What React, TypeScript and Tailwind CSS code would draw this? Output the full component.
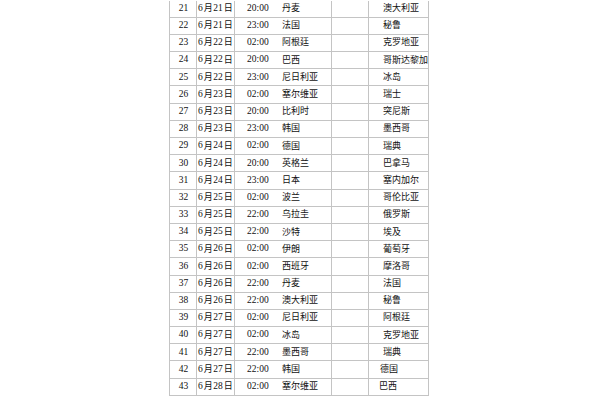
import React from "react";

type Row = [number, string, string, string, string, number?];

const rows: Row[] = [
  [21, "21", "20:00", "丹麦", "澳大利亚"],
  [22, "21", "23:00", "法国", "秘鲁"],
  [23, "22", "02:00", "阿根廷", "克罗地亚"],
  [24, "22", "20:00", "巴西", "哥斯达黎加"],
  [25, "22", "23:00", "尼日利亚", "冰岛"],
  [26, "23", "02:00", "塞尔维亚", "瑞士"],
  [27, "23", "20:00", "比利时", "突尼斯"],
  [28, "23", "23:00", "韩国", "墨西哥"],
  [29, "24", "02:00", "德国", "瑞典"],
  [30, "24", "20:00", "英格兰", "巴拿马"],
  [31, "24", "23:00", "日本", "塞内加尔"],
  [32, "25", "02:00", "波兰", "哥伦比亚"],
  [33, "25", "22:00", "乌拉圭", "俄罗斯"],
  [34, "25", "22:00", "沙特", "埃及"],
  [35, "26", "02:00", "伊朗", "葡萄牙"],
  [36, "26", "02:00", "西班牙", "摩洛哥"],
  [37, "26", "22:00", "丹麦", "法国"],
  [38, "26", "22:00", "澳大利亚", "秘鲁"],
  [39, "27", "02:00", "尼日利亚", "阿根廷"],
  [40, "27", "02:00", "冰岛", "克罗地亚"],
  [41, "27", "22:00", "墨西哥", "瑞典"],
  [42, "27", "22:00", "韩国", "德国", 11],
  [43, "28", "02:00", "塞尔维亚", "巴西", 10],
];

export default function App() {
  return (
    <div
      className="w-[600px] h-[400px] overflow-hidden bg-white text-[9px] leading-none text-[#111]"
      style={{ fontFamily: '"Liberation Serif", "Noto Sans CJK SC", serif' }}
    >
      <div className="ml-[169px] mt-[0.5px] w-[260px] border-l border-[#c4c4c4] flex flex-col">
        {rows.map(([n, d, t, a, b, pad]) => (
          <div
            key={n}
            className="h-[17.2px] grid grid-cols-[27px_38px_97px_37px_60px] border-b border-[#c4c4c4] items-stretch"
          >
            <div className="border-r border-[#c4c4c4] flex items-center justify-center pl-[1px] text-[9.5px]">
              {n}
            </div>
            <div className="border-r border-[#c4c4c4] flex items-center pl-[1px] whitespace-nowrap">
              <span className="text-[9.5px]">6</span>
              <span className="ml-[1px]">月</span>
              <span className="ml-[0.5px] text-[9.5px]">{d}</span>
              <span className="ml-[1px]">日</span>
            </div>
            <div className="border-r border-[#c4c4c4] grid grid-cols-[47px_1fr] items-center">
              <span className="pl-[12px] text-[9.5px]">{t}</span>
              <span className="whitespace-nowrap">{a}</span>
            </div>
            <div className="border-r border-[#c4c4c4]" />
            <div
              className={`border-r border-[#c4c4c4] flex items-center whitespace-nowrap ${
                pad === 11 ? "pl-[11px]" : pad === 10 ? "pl-[10px]" : "pl-[14px]"
              }`}
            >
              {b}
            </div>
          </div>
        ))}
      </div>
    </div>
  );
}
